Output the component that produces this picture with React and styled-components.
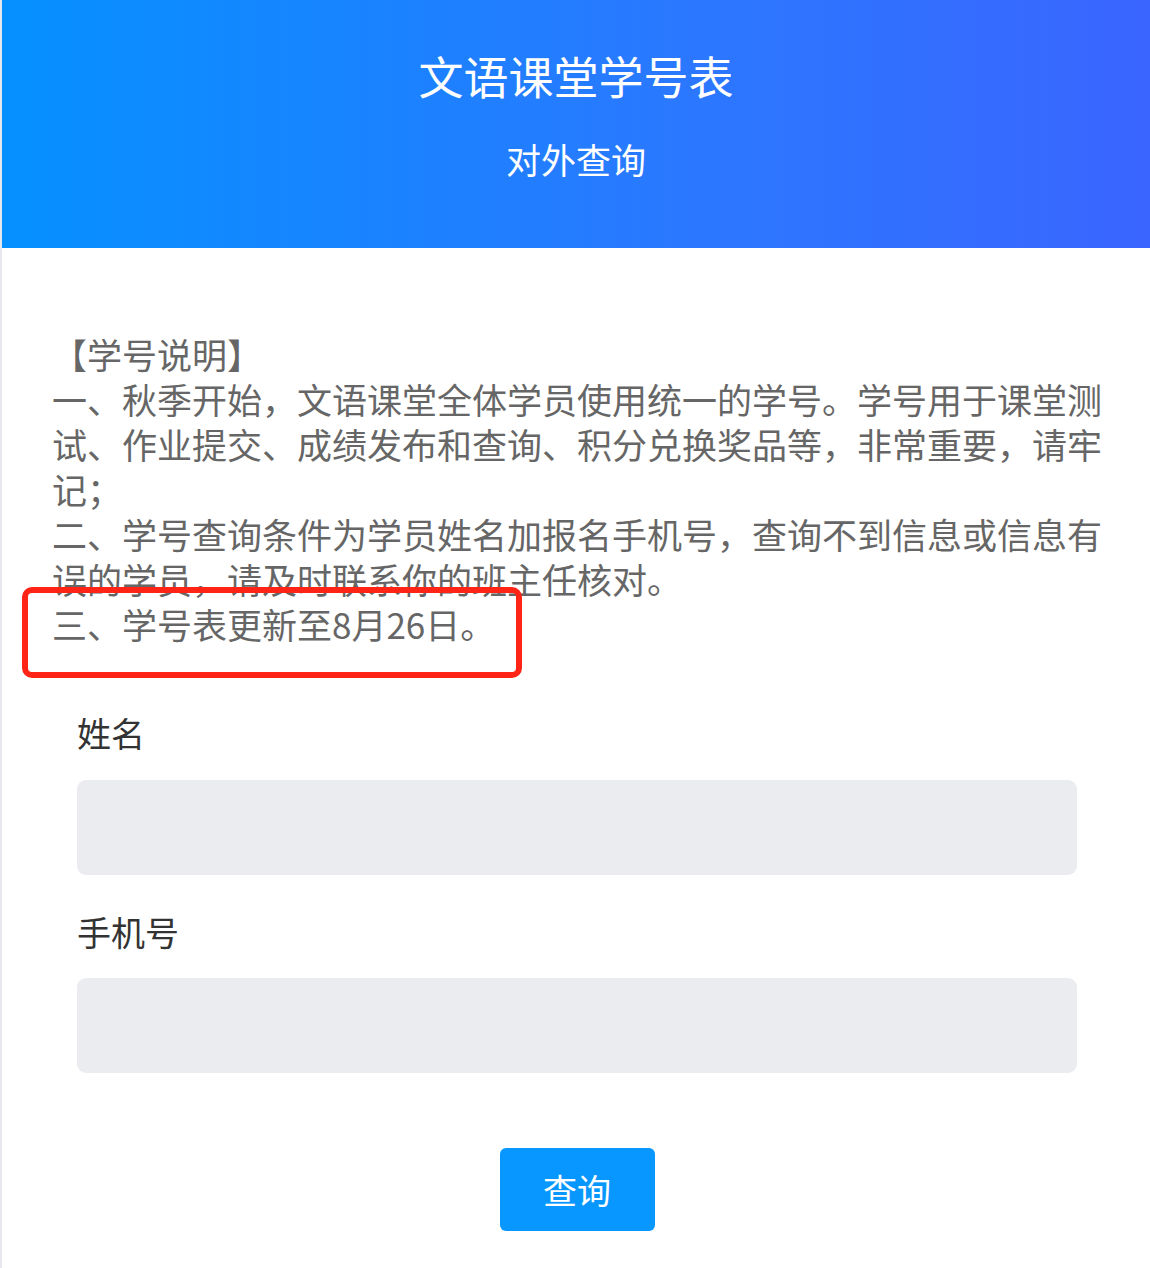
import React from "react";
import styled, { createGlobalStyle } from "styled-components";

const GlobalStyle = createGlobalStyle`
  html, body {
    margin: 0;
    padding: 0;
    background: #ffffff;
  }
  * {
    box-sizing: border-box;
  }
`;

const Page = styled.div`
  position: relative;
  width: 1150px;
  min-height: 1268px;
  border-left: 2px solid #e6e8ed;
  background: #ffffff;
  font-family: "Noto Sans CJK SC", "Noto Sans", sans-serif;
`;

const Header = styled.header`
  height: 248px;
  display: flex;
  flex-direction: column;
  align-items: center;
  background: linear-gradient(90deg, #0590ff 0%, #2b78ff 60%, #3a65ff 100%);
  color: #ffffff;
  h1 {
    margin: 46px 0 0;
    font-size: 45px;
    font-weight: 400;
    line-height: 60px;
  }
  h2 {
    margin: 30px 0 0;
    font-size: 35px;
    font-weight: 400;
    line-height: 46px;
  }
`;

const Notice = styled.div`
  margin-top: 83px;
  padding: 0 46px 0 50px;
  font-size: 35px;
  line-height: 45px;
  color: #666666;
  p {
    margin: 0;
  }
`;

const Form = styled.form`
  margin-top: 64px;
  padding: 0 73px 0 75px;
  display: flex;
  flex-direction: column;
`;

const Label = styled.label`
  display: block;
  font-size: 34px;
  line-height: 45px;
  color: #333333;
  margin-top: ${(p) => (p.$first ? "0" : "34px")};
`;

const Input = styled.input`
  display: block;
  width: 1000px;
  height: 95px;
  margin-top: 24.5px;
  border: none;
  border-radius: 9px;
  background: #ebecf0;
  outline: none;
  font-size: 32px;
  padding: 0 24px;
  font-family: inherit;
`;

const Submit = styled.button`
  align-self: center;
  width: 155px;
  height: 83px;
  margin-top: 75px;
  border: none;
  border-radius: 6px;
  background: #0897ff;
  color: #ffffff;
  font-size: 34px;
  font-family: inherit;
  cursor: pointer;
`;

const Highlight = styled.div`
  position: absolute;
  left: 20px;
  top: 587px;
  width: 500px;
  height: 91px;
  border: 6px solid #ff2416;
  border-radius: 10px;
  pointer-events: none;
`;

export default function App() {
  return (
    <>
      <GlobalStyle />
      <Page>
        <Header>
          <h1>文语课堂学号表</h1>
          <h2>对外查询</h2>
        </Header>
        <Notice>
          <p>【学号说明】</p>
          <p>
            一、秋季开始，文语课堂全体学员使用统一的学号。学号用于课堂测试、作业提交、成绩发布和查询、积分兑换奖品等，非常重要，请牢记；
          </p>
          <p>
            二、学号查询条件为学员姓名加报名手机号，查询不到信息或信息有误的学员，请及时联系你的班主任核对。
          </p>
          <p>三、学号表更新至8月26日。</p>
        </Notice>
        <Form onSubmit={(e) => e.preventDefault()}>
          <Label $first htmlFor="name">姓名</Label>
          <Input id="name" type="text" />
          <Label htmlFor="phone">手机号</Label>
          <Input id="phone" type="tel" />
          <Submit type="submit">查询</Submit>
        </Form>
        <Highlight />
      </Page>
    </>
  );
}
